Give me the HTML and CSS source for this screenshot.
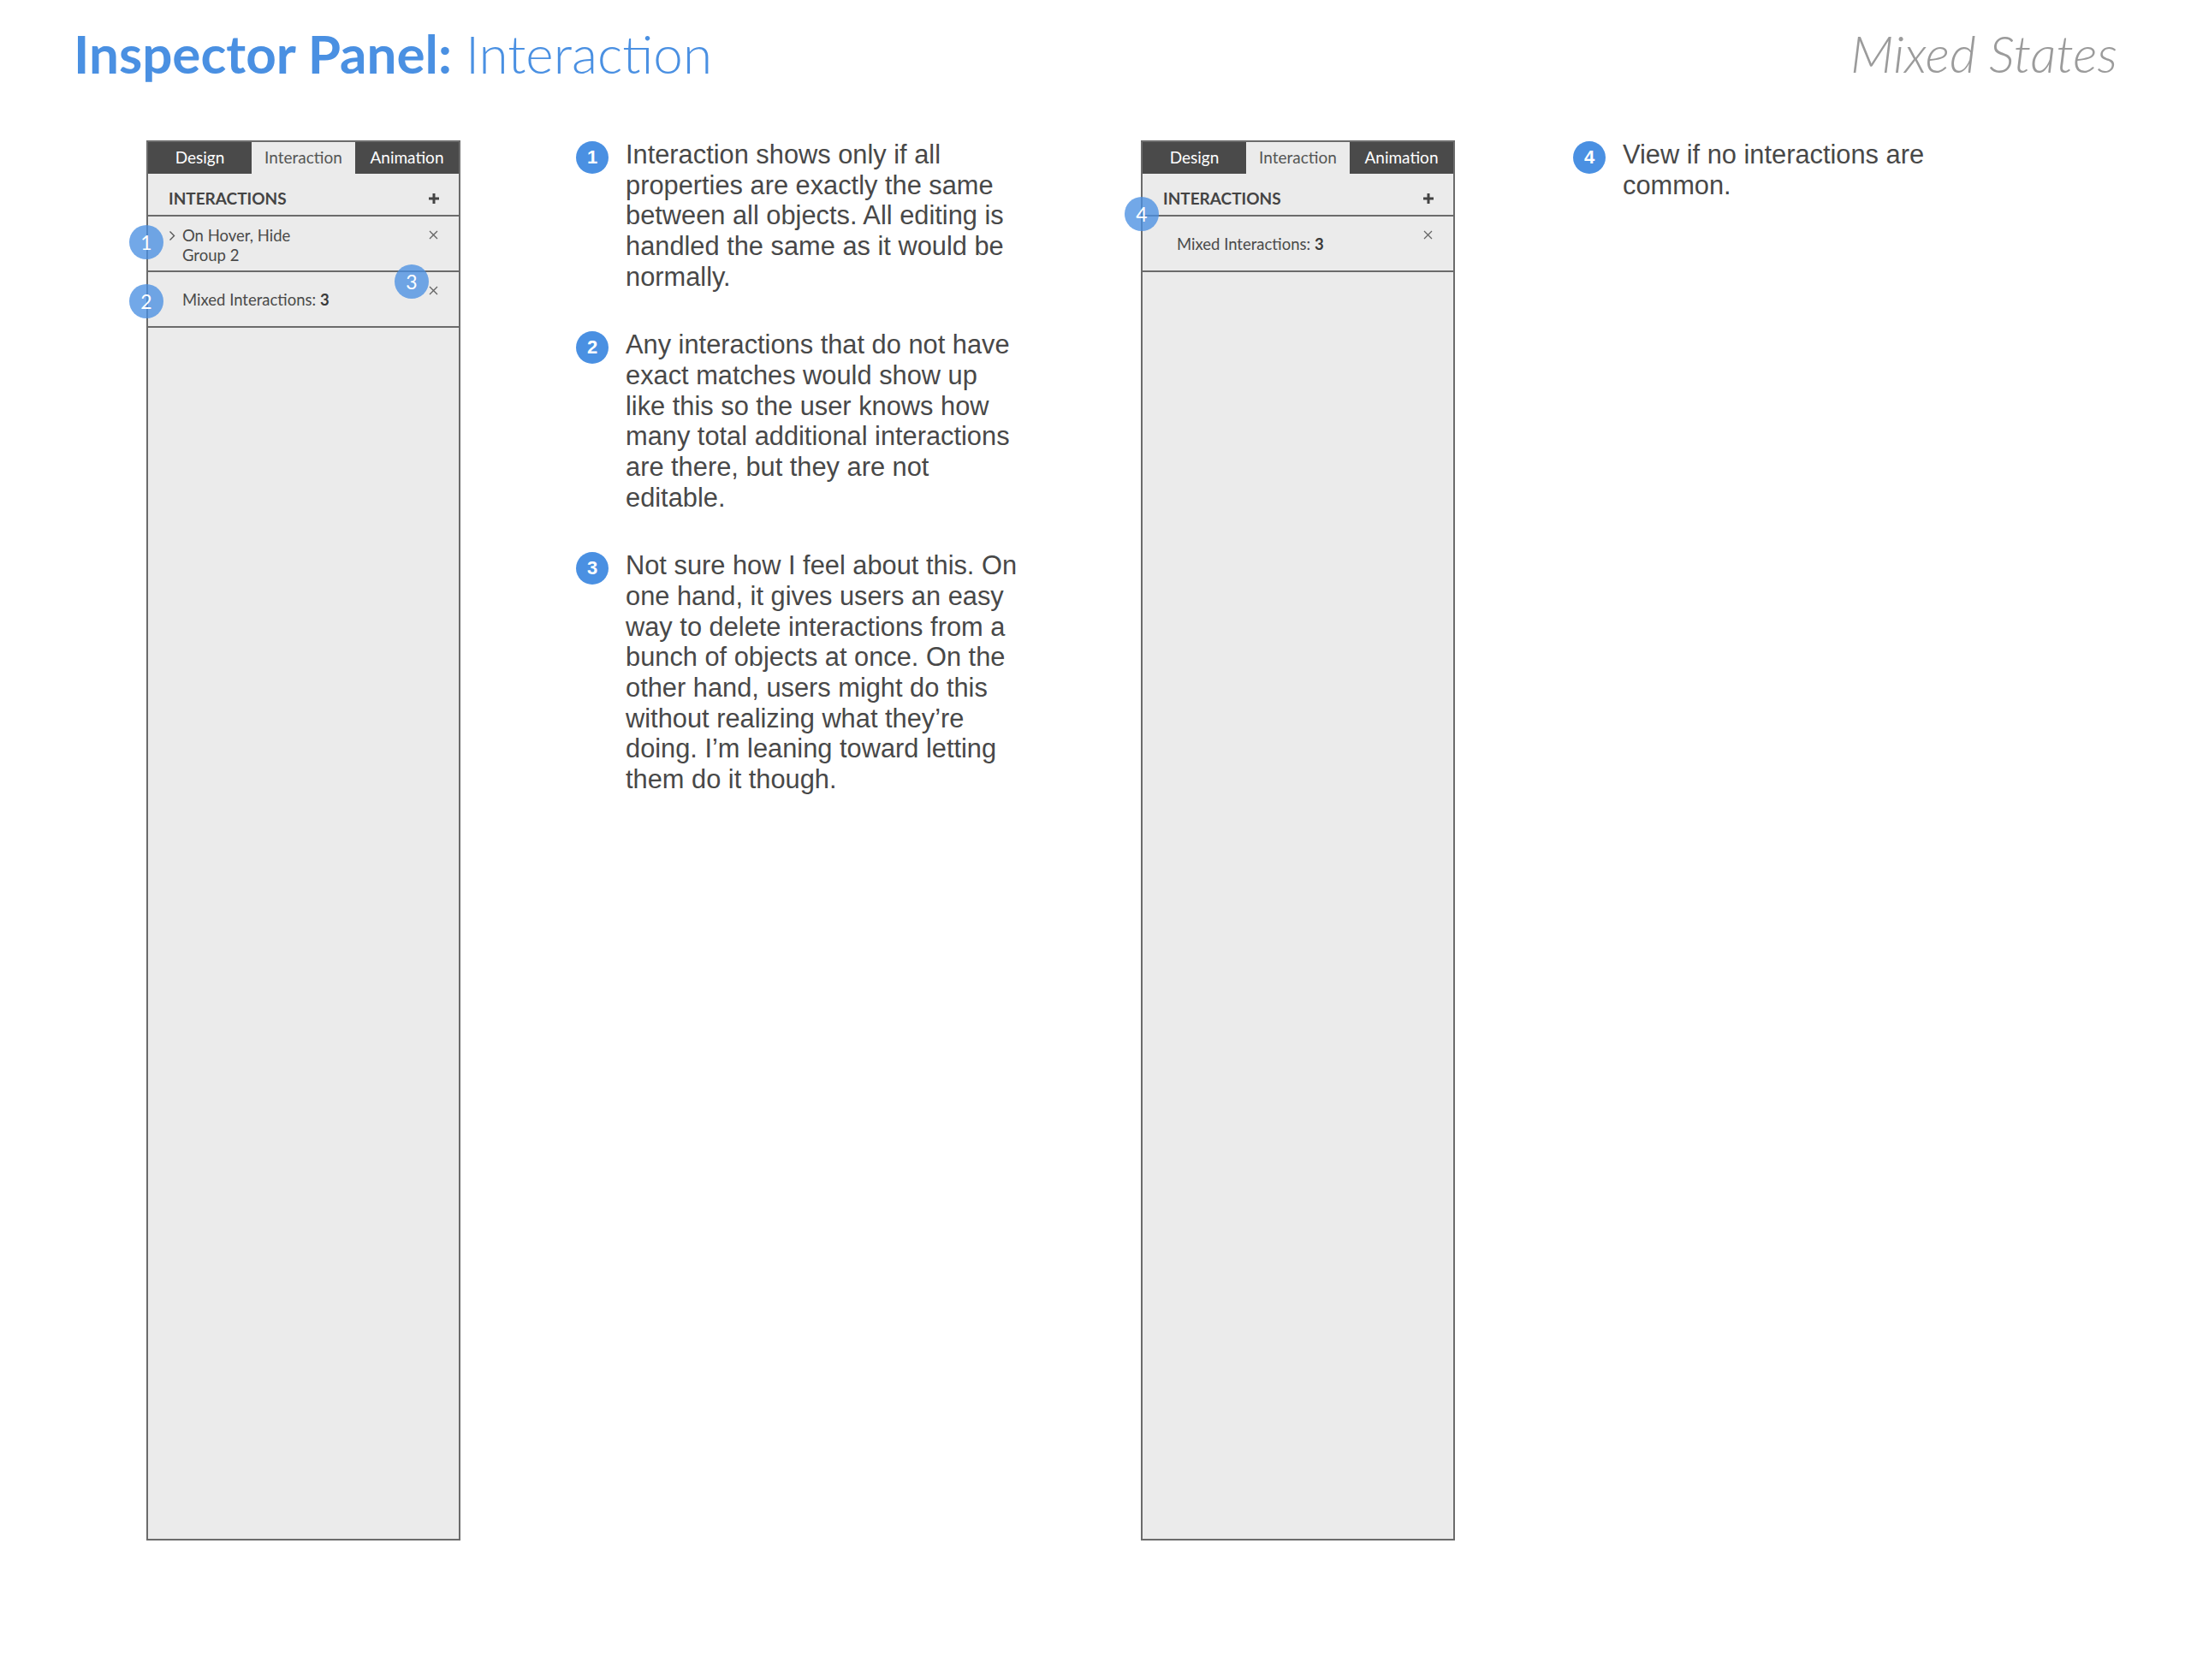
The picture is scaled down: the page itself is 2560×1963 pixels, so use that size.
FILE: index.html
```html
<!DOCTYPE html>
<html lang="en">
<head>
<meta charset="utf-8">
<title>Inspector Panel: Interaction</title>
<link rel="stylesheet" href="styles.css">
</head>
<body>
<header class="top">
  <h1 class="title"><span class="title-strong">Inspector Panel:</span> <span class="title-light">Interaction</span></h1>
  <div class="subtitle">Mixed States</div>
</header>
<main class="board">
  <section class="panel">
    <div class="tabs">
      <div class="tab">Design</div>
      <div class="tab active">Interaction</div>
      <div class="tab">Animation</div>
    </div>
    <div class="section-head">
      <span class="section-title">INTERACTIONS</span>
      <svg class="plus" width="14" height="14" viewBox="0 0 14 14"><path d="M7 1v12M1 7h12" stroke="#444" stroke-width="3" fill="none"/></svg>
    </div>
    <div class="row row-double">
      <span class="chev"><svg width="8" height="13" viewBox="0 0 8 13"><path d="M1.5 1.5l5 5-5 5" stroke="#555" stroke-width="1.4" fill="none"/></svg></span>
      <span class="label">On Hover, Hide<br>Group 2</span>
      <span class="close"><svg width="11" height="11" viewBox="0 0 11 11"><path d="M1 1l9 9M10 1l-9 9" stroke="#666" stroke-width="1.3" fill="none"/></svg></span>
    </div>
    <div class="row row-single">
      <span class="chev"></span>
      <span class="label">Mixed Interactions: <b>3</b></span>
      <span class="close"><svg width="11" height="11" viewBox="0 0 11 11"><path d="M1 1l9 9M10 1l-9 9" stroke="#666" stroke-width="1.3" fill="none"/></svg></span>
    </div>
    <span class="pin pin-1">1</span>
    <span class="pin pin-2">2</span>
    <span class="pin pin-3">3</span>
  </section>

  <section class="notes notes-main">
    <div class="note">
      <span class="badge">1</span>
      <p class="note-text">Interaction shows only if all<br>properties are exactly the same<br>between all objects. All editing is<br>handled the same as it would be<br>normally.</p>
    </div>
    <div class="note">
      <span class="badge">2</span>
      <p class="note-text">Any interactions that do not have<br>exact matches would show up<br>like this so the user knows how<br>many total additional interactions<br>are there, but they are not<br>editable.</p>
    </div>
    <div class="note">
      <span class="badge">3</span>
      <p class="note-text">Not sure how I feel about this. On<br>one hand, it gives users an easy<br>way to delete interactions from a<br>bunch of objects at once. On the<br>other hand, users might do this<br>without realizing what they’re<br>doing. I’m leaning toward letting<br>them do it though.</p>
    </div>
  </section>

  <section class="panel">
    <div class="tabs">
      <div class="tab">Design</div>
      <div class="tab active">Interaction</div>
      <div class="tab">Animation</div>
    </div>
    <div class="section-head">
      <span class="section-title">INTERACTIONS</span>
      <svg class="plus" width="14" height="14" viewBox="0 0 14 14"><path d="M7 1v12M1 7h12" stroke="#444" stroke-width="3" fill="none"/></svg>
    </div>
    <div class="row row-single">
      <span class="chev"></span>
      <span class="label">Mixed Interactions: <b>3</b></span>
      <span class="close"><svg width="11" height="11" viewBox="0 0 11 11"><path d="M1 1l9 9M10 1l-9 9" stroke="#666" stroke-width="1.3" fill="none"/></svg></span>
    </div>
    <span class="pin pin-4">4</span>
  </section>

  <section class="notes notes-side">
    <div class="note">
      <span class="badge">4</span>
      <p class="note-text">View if no interactions are<br>common.</p>
    </div>
  </section>
</main>
</body>
</html>
```

FILE: styles.css
```css
html, body {
  margin: 0;
  padding: 0;
  background: #ffffff;
}

body {
  width: 2560px;
  height: 1963px;
  overflow: hidden;
  font-family: "Lato", "Liberation Sans", sans-serif;
}

.top {
  display: flex;
  justify-content: space-between;
  align-items: flex-start;
  padding: 25px 86px 0 86px;
  height: 74px;
}

.title {
  margin: 0;
  font-size: 62px;
  line-height: 74px;
  color: #4a90e2;
  font-weight: 400;
  white-space: nowrap;
}

.title-strong {
  font-weight: 700;
}

.title-light {
  font-weight: 300;
}

.subtitle {
  font-size: 60px;
  line-height: 74px;
  font-weight: 300;
  font-style: italic;
  color: #9b9b9b;
  white-space: nowrap;
}

.board {
  display: flex;
  align-items: flex-start;
  padding-left: 171px;
  margin-top: 65px;
}

/* Inspector panel */
.panel {
  position: relative;
  box-sizing: border-box;
  width: 367px;
  height: 1636px;
  border: 2px solid #6b6b6b;
  background: #ebebeb;
  flex: none;
}

.tabs {
  display: flex;
  height: 37px;
  background: #4a4a4a;
}

.tab {
  flex: 1;
  box-sizing: border-box;
  height: 37px;
  line-height: 35px;
  padding-bottom: 2px;
  text-align: center;
  font-size: 19px;
  color: #ffffff;
}

.tab.active {
  background: #ebebeb;
  color: #555555;
}

.section-head {
  display: flex;
  justify-content: space-between;
  align-items: flex-start;
  box-sizing: border-box;
  height: 50px;
  padding: 18px 24px 0 24px;
  border-bottom: 2px solid #6b6b6b;
}

.section-title {
  font-size: 19px;
  line-height: 21px;
  font-weight: 700;
  color: #444444;
}

.plus {
  display: block;
  margin-top: 4px;
  margin-right: -2px;
}

.row {
  display: flex;
  align-items: flex-start;
  box-sizing: border-box;
  height: 65px;
  padding: 0 24px;
  border-bottom: 2px solid #6b6b6b;
  color: #4a4a4a;
}

.chev {
  flex: none;
  width: 16px;
  margin-top: 16px;
}

.chev svg {
  display: block;
}

.label {
  flex: 1;
  font-size: 18.5px;
  line-height: 23px;
  margin-top: 10.5px;
  color: #4a4a4a;
}

.row-single .label {
  margin-top: 20.5px;
}

.label b {
  font-weight: 700;
  color: #3a3a3a;
}

.close {
  flex: none;
  margin-top: 16px;
  margin-right: 0;
}

.close svg {
  display: block;
}

/* annotation pins over the panel */
.pin {
  position: absolute;
  width: 40px;
  height: 40px;
  border-radius: 50%;
  background: rgba(74, 144, 226, 0.78);
  color: #ffffff;
  font-size: 23px;
  line-height: 40px;
  text-align: center;
}

.pin-1 { left: -22px; top: 97px; }
.pin-2 { left: -22px; top: 166px; }
.pin-3 { left: 288px; top: 143px; }
.pin-4 { left: -21px; top: 64px; }

/* notes */
.notes {
  flex: none;
  margin-top: -1px;
}

.notes-main {
  width: 525px;
  margin-left: 135px;
  margin-right: 135px;
}

.notes-side {
  margin-left: 138px;
}

.note {
  display: flex;
  align-items: flex-start;
  margin-bottom: 44px;
}

.badge {
  flex: none;
  width: 38px;
  height: 38px;
  margin-top: 2px;
  border-radius: 50%;
  background: #4a90e2;
  color: #ffffff;
  font-family: "Liberation Sans", Arial, sans-serif;
  font-weight: 700;
  font-size: 22px;
  line-height: 38px;
  text-align: center;
}

.note-text {
  margin: 0 0 0 20px;
  font-family: "Liberation Sans", Arial, sans-serif;
  font-size: 30.8px;
  line-height: 35.65px;
  color: #484848;
  white-space: nowrap;
}
```
